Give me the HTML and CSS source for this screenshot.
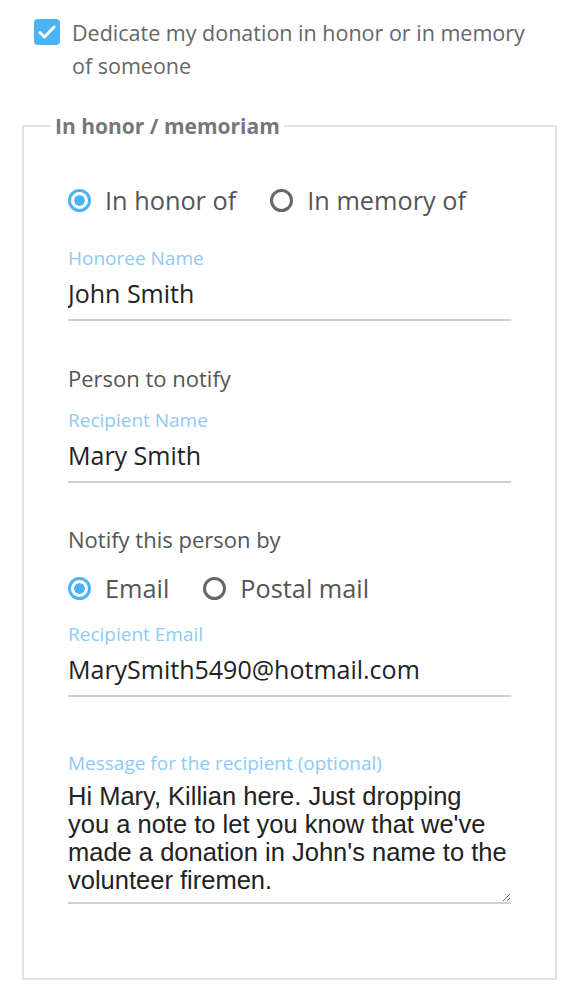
FILE: index.html
```html
<!DOCTYPE html>
<html lang="en">

<head>
    <meta charset="UTF-8">
    <meta name="viewport" content="width=device-width, initial-scale=1.0">
    <title>Dedication</title>
    <link rel="stylesheet" href="styles.css">
</head>

<body>
    <div class="page">
        <label class="dedicate">
            <input type="checkbox" class="check" checked>
            <span>Dedicate my donation in honor or in memory of someone</span>
        </label>

        <fieldset class="tribute">
            <legend>In honor / memoriam</legend>

            <div class="choices">
                <label class="choice">
                    <input type="radio" name="kind" checked>
                    <span>In honor of</span>
                </label>
                <label class="choice">
                    <input type="radio" name="kind">
                    <span>In memory of</span>
                </label>
            </div>

            <div class="field honoree">
                <label for="honoree">Honoree Name</label>
                <input id="honoree" type="text" value="John Smith">
            </div>

            <p class="heading">Person to notify</p>

            <div class="field">
                <label for="recipient">Recipient Name</label>
                <input id="recipient" type="text" value="Mary Smith">
            </div>

            <p class="heading notify">Notify this person by</p>

            <div class="choices by">
                <label class="choice">
                    <input type="radio" name="by" checked>
                    <span>Email</span>
                </label>
                <label class="choice">
                    <input type="radio" name="by">
                    <span>Postal mail</span>
                </label>
            </div>

            <div class="field email">
                <label for="email">Recipient Email</label>
                <input id="email" type="email" value="MarySmith5490@hotmail.com">
            </div>

            <div class="field message">
                <label for="note">Message for the recipient (optional)</label>
                <textarea id="note" rows="4">Hi Mary, Killian here. Just dropping you a note to let you know that we've made a donation in John's name to the volunteer firemen.</textarea>
            </div>
        </fieldset>
    </div>
</body>

</html>
```

FILE: styles.css
```css
body {
    font-family: "Open Sans", sans-serif;
    background-color: #fff;
    color: #555;
    margin: 0;
    padding: 0;
}

.page {
    padding: 16px 26px 0 22px;
}

.dedicate {
    display: flex;
    align-items: flex-start;
    gap: 12px;
    padding: 0 20px 0 12px;
    font-size: 21.5px;
    line-height: 33px;
    color: #666;
}

.check {
    appearance: none;
    flex: none;
    width: 26px;
    height: 26px;
    margin: 3px 0 0 0;
    border-radius: 4px;
    background-color: #4db3f9;
    background-image: url("data:image/svg+xml,%3Csvg xmlns='http://www.w3.org/2000/svg' viewBox='0 0 26 26'%3E%3Cpath d='M6 13.5l4.5 4.5L20 8' fill='none' stroke='%23fff' stroke-width='3' stroke-linecap='round' stroke-linejoin='round'/%3E%3C/svg%3E");
}

.tribute {
    margin: 30px 0 0 0;
    padding: 40px 44px 74px 44px;
    border: 2px solid #e3e3e3;
    min-width: 0;
}

.tribute legend {
    margin-left: -17px;
    padding: 0 4px;
    font-size: 21px;
    line-height: 28px;
    font-weight: 700;
    color: #777;
}

.choices {
    display: flex;
    gap: 34px;
    height: 40px;
    align-items: center;
}

.choices.by {
    margin-top: 14px;
}

.choice {
    display: flex;
    align-items: center;
    gap: 14px;
    font-size: 25.3px;
    color: #555;
}

.choice input {
    appearance: none;
    width: 23px;
    height: 23px;
    margin: 0;
    border-radius: 50%;
    border: 3px solid #666;
}

.choice input:checked {
    border-color: #4db3f9;
    background: radial-gradient(circle, #4db3f9 0 5px, #fff 5.5px);
}

.field {
    display: flex;
    flex-direction: column;
    margin-top: 12px;
}

.field.honoree {
    margin-top: 25px;
}

.field.email {
    margin-top: 13px;
}

.field label {
    font-size: 19px;
    line-height: 26px;
    color: #8ccaf7;
}

.field input {
    font-family: "Open Sans", sans-serif;
    font-size: 25px;
    line-height: 32px;
    height: 32px;
    color: #222;
    border: none;
    border-bottom: 2px solid #cfcfcf;
    padding: 6px 0 10px 0;
    margin: 0;
    outline: none;
    background: none;
}

.heading {
    margin: 42px 0 0 0;
    font-size: 22px;
    line-height: 30px;
    color: #555;
}

.heading.notify {
    margin-top: 41px;
}

.heading + .field {
    margin-top: 14px;
}

.message {
    margin-top: 53px;
}

.message textarea {
    font-family: "Liberation Sans", Arial, sans-serif;
    font-size: 25.5px;
    line-height: 28px;
    color: #222;
    border: none;
    border-bottom: 2px solid #cfcfcf;
    padding: 6px 3px 8px 0;
    margin: 0;
    outline: none;
    background: none;
}
```
